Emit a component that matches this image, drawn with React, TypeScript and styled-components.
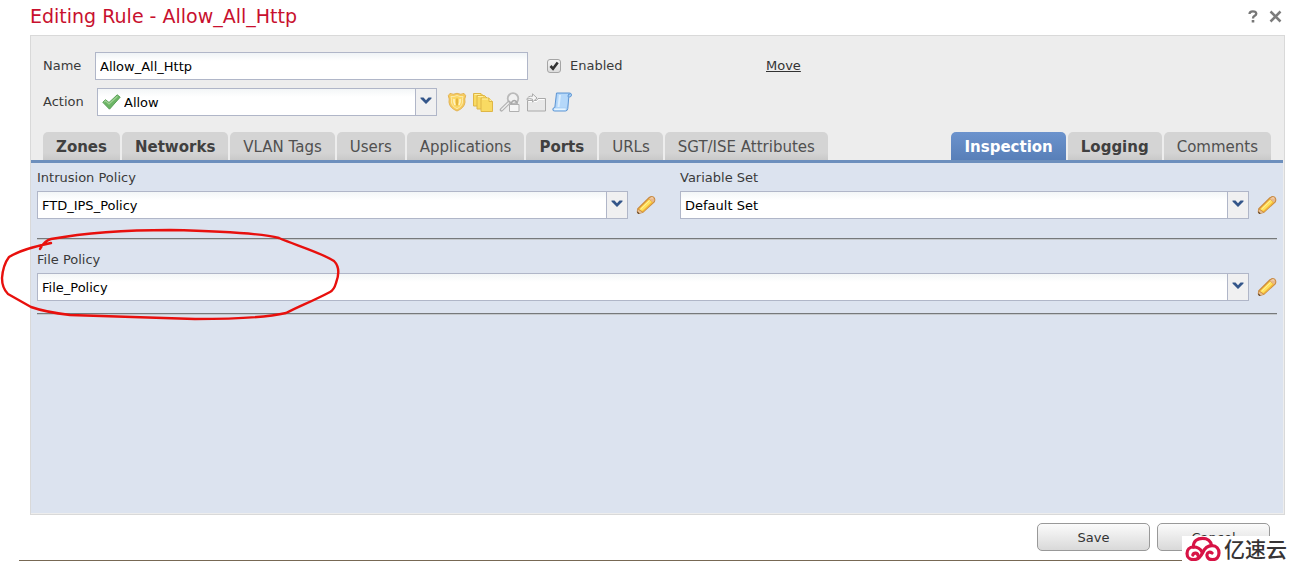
import React from "react";
import styled, { createGlobalStyle } from "styled-components";

const GlobalStyle = createGlobalStyle`
  *, *::before, *::after { box-sizing: border-box; }
  body {
    margin: 0;
    background: #fff;
    color: #3a3a3a;
    font: 13px/16px "DejaVu Sans", Verdana, sans-serif;
  }
  input, select, button { font: inherit; margin: 0; }
`;

const Page = styled.div`
  position: relative;
  overflow: hidden;
`;

const Dialog = styled.main`
  padding: 0 6px 0 30px;
`;

const TitleBar = styled.header`
  display: flex;
  align-items: center;
  justify-content: space-between;
  height: 35px;
  padding: 0 3px 3px 0;
`;

const Title = styled.h1`
  margin: 0;
  color: #c8102e;
  font-size: 19px;
  font-weight: 400;
  line-height: 24px;
`;

const TitleTools = styled.div`
  display: flex;
  gap: 11px;
`;

const IconButton = styled.button`
  display: flex;
  flex: none;
  padding: 0;
  border: 0;
  background: none;
  cursor: pointer;
`;

const Panel = styled.form`
  padding: 0 1px 1px 0;
  border: 1px solid #d9d9d9;
  background: #ededed;
`;

const RuleFields = styled.div`
  display: flex;
  flex-direction: column;
  gap: 8px;
  padding: 16px 12px;
`;

const FieldRow = styled.div`
  display: flex;
  align-items: center;
  height: 28px;
`;

const RowLabel = styled.label<{ $width: number }>`
  flex: none;
  width: ${(p) => p.$width}px;
`;

const TextInput = styled.input`
  width: 433px;
  height: 28px;
  padding: 0 4px;
  border: 1px solid #b0b6c8;
  background: linear-gradient(#eff3f6, #fff 8px);
  color: #000;
`;

const EnabledLabel = styled.label`
  display: flex;
  align-items: center;
  gap: 9px;
  width: 219px;
  margin-left: 19px;
`;

const Checkbox = styled.input`
  appearance: none;
  width: 14px;
  height: 14px;
  border: 1px solid #a5a5a5;
  border-radius: 3px;
  background: linear-gradient(#f4f4f4, #dcdcdc);
  &:checked {
    background: url("data:image/svg+xml,%3Csvg xmlns='http://www.w3.org/2000/svg' viewBox='0 0 12 12'%3E%3Cpath d='M2.5 6 5 8.700 9.700 2.500' fill='none' stroke='%23333' stroke-width='2.600'/%3E%3C/svg%3E"),
      linear-gradient(#f4f4f4, #dcdcdc);
  }
`;

const MoveLink = styled.a`
  color: #333;
`;

const Combo = styled.div<{ $width?: string }>`
  position: relative;
  display: flex;
  flex: ${(p) => (p.$width ? "none" : "1")};
  width: ${(p) => p.$width ?? "auto"};
  min-width: 0;
  height: 28px;
`;

const Select = styled.select<{ $indent?: number }>`
  appearance: none;
  width: 100%;
  padding: 2px 24px 0 ${(p) => p.$indent ?? 4}px;
  border: 1px solid #b0b6c8;
  border-radius: 0;
  background: linear-gradient(#f3f6f7, #fff 8px);
  color: #000;
`;

const ComboArrow = styled.span`
  position: absolute;
  inset: 1px 1px 1px auto;
  display: flex;
  align-items: center;
  justify-content: center;
  width: 21px;
  padding: 0 1px 2px 0;
  border-left: 1px solid #b0b6c8;
  background: #f0f0f1;
  pointer-events: none;
`;

const ComboIcon = styled.span`
  position: absolute;
  top: 6px;
  left: 5px;
  display: flex;
  pointer-events: none;
`;

const OptionIcons = styled.div`
  display: flex;
  gap: 6px;
  margin-left: 10px;
`;

const TabBar = styled.nav`
  display: flex;
  justify-content: space-between;
  padding: 0 12px;
  border-bottom: 3px solid #6d8fbd;
`;

const TabGroup = styled.div`
  display: flex;
  gap: 2px;
`;

const Tab = styled.button<{ $strong?: boolean; $active?: boolean }>`
  height: 28px;
  padding: 1px 13px 0;
  border: 0;
  border-radius: 5px 5px 0 0;
  background: ${(p) =>
    p.$active ? "linear-gradient(#6c93cd, #587fb8)" : "linear-gradient(#d4d4d4 75%, #c9c9c9)"};
  color: ${(p) => (p.$active ? "#fff" : p.$strong ? "#404040" : "#505050")};
  font-size: 15px;
  font-weight: ${(p) => (p.$strong || p.$active ? 700 : 400)};
  white-space: nowrap;
`;

const Content = styled.section`
  min-height: 350px;
  padding: 7px 6px 0;
  background: #dce3ef;
`;

const PolicyGrid = styled.div`
  display: grid;
  grid-template-columns: 619fr 597fr;
  gap: 24px;
`;

const PolicyField = styled.div`
  display: flex;
  flex-direction: column;
  gap: 5px;
`;

const ComboRow = styled.div`
  display: flex;
  align-items: center;
  gap: 8px;
`;

const Divider = styled.hr<{ $gap: number }>`
  height: 2px;
  margin: ${(p) => p.$gap}px 0 12px;
  border: 0;
  border-top: 1px solid #76797b;
  border-bottom: 1px solid #c5c9cd;
`;

const Footer = styled.footer`
  display: flex;
  justify-content: flex-end;
  gap: 7px;
  padding: 8px 15px 9px 0;
`;

const PushButton = styled.button`
  width: 113px;
  height: 28px;
  padding: 2px 6px 0;
  border: 1px solid #999;
  border-radius: 5px;
  background: linear-gradient(#fbfbfb, #d9d9d9);
  color: #333;
`;

const BottomLine = styled.div`
  height: 1px;
  margin-left: 19px;
  background: #776853;
`;

const Annotation = styled.svg`
  position: absolute;
  top: 225px;
  left: 0;
  pointer-events: none;
`;

const Watermark = styled.div`
  position: absolute;
  right: 0;
  bottom: 0;
  display: flex;
  align-items: center;
  gap: 3px;
  height: 25px;
  padding: 0 4px 0 3px;
  background: #fff;
  color: #373435;
  font: 500 21px/25px "Noto Sans CJK SC", sans-serif;
`;

const Chevron = () => (
  <svg width="12" height="8" viewBox="0 0 12 8" aria-hidden="true">
    <path d="M.5.500H3.500L6 3.200 8.500.5H11.500V1.500L6 7 .5 1.500Z" fill="#34568a" />
  </svg>
);

const Pencil = () => (
  <svg width="20" height="20" viewBox="0 0 20 20" aria-hidden="true">
    <path d="M1.200 13.500 12.600 2.300Q15.500.2 18 1.800 20.300 4 18.700 7.200L7.200 17.800 3 19Q.5 18.500.8 16.500Z" fill="#c88a42" />
    <path d="M2.300 14 12.800 3.700 17.200 7.600 7 17Z" fill="#f3b83a" />
    <path d="M3.600 13.900 13 4.700 15.700 7 6.200 16Z" fill="#ffe25e" />
    <path d="M4.500 14.200 13.600 5.300" stroke="#fff4a4" strokeWidth="1" />
    <path d="M13.300 3.300Q15.700 1.400 17.500 2.600 19 4.500 17.700 6.800L17 7.400 12.800 3.800Z" fill="#e9b98c" />
    <path d="M14.500 3.300Q16 2.300 17 3.200" fill="none" stroke="#f8dcc0" />
    <path d="m1.900 14.600 4.600 2.900-3.400.8-1.500-1.300Z" fill="#e7bf92" />
    <path d="M1.200 16.200 3.700 18.500 2.300 18.900Q.8 18 1.200 16.200Z" fill="#5a4330" />
  </svg>
);

const CheckIcon = () => (
  <svg width="19" height="16" viewBox="0 0 19 16" aria-hidden="true">
    <path d="M.8 8.300 3.500 5.700 7 8.500 15.200.8 18.200 3.200 7.500 15.200Z" fill="#6cb565" stroke="#5a9f57" strokeWidth="1" strokeLinejoin="round" />
    <path d="m2.300 8.100 1.300-1.200L7 10l8.500-7.800" fill="none" stroke="#9fd294" strokeWidth="1.200" />
  </svg>
);

const ShieldIcon = () => (
  <svg width="20" height="20" viewBox="0 0 20 20" aria-hidden="true">
    <path d="M1.300 3.700 3 1.400Q6 3.200 10 1.300 14 3.200 17 1.400L18.700 3.700Q17.200 7 18 10.200 17.400 16 10 19 2.600 16 2 10.200 2.800 7 1.300 3.700Z" fill="#f6cb5c" stroke="#e3b455" />
    <path d="M3.900 4.500Q7 5 10 3.500 13 5 16.100 4.500 15 7 15.600 10 15 14.500 10 16.700 5 14.500 4.400 10 5 7 3.900 4.500Z" fill="#fbd765" stroke="#fdeaa8" />
    <path d="M7 7Q6.500 10 8 13M13 7Q13.500 10 12 13" fill="none" stroke="#fff3c4" strokeWidth="1.600" />
    <path d="M10 6.500v7" stroke="#e6b63e" strokeWidth="2" />
  </svg>
);

const FilesIcon = () => (
  <svg width="20" height="20" viewBox="0 0 20 20" aria-hidden="true">
    <g fill="#f9da62" stroke="#dfb646">
      <path d="M.5 1.500H8l3 3V14H.5Z" />
      <path d="M4 3.500h7.500l3 3V17H4Z" />
      <path d="M8 6h8l3.500 3.500v10H8Z" />
    </g>
    <path d="M16 6v3.500h3.500" fill="#fff1a3" stroke="#dfb646" />
    <path d="M1.500 2.500H7M5 4.500h5M9 7h6" stroke="#fff0a0" />
  </svg>
);

const SearchLockIcon = () => (
  <svg width="21" height="20" viewBox="0 0 21 20" aria-hidden="true">
    <circle cx="14" cy="6.500" r="5.300" fill="#f1f1f1" stroke="#bababa" strokeWidth="1.800" />
    <path d="M10 10.500 2.500 17.800" stroke="#b0b0b0" strokeWidth="3.600" strokeLinecap="round" />
    <path d="M9.500 11 2.800 17.500" stroke="#eee" strokeWidth="1.500" strokeLinecap="round" />
    <path d="M12.500 13v-2.500Q15.300 6.500 18 10.500V13" fill="none" stroke="#a9a9a9" strokeWidth="1.500" />
    <path d="M10.500 12.500h9.500v7H10.500Z" fill="#f6f6f6" stroke="#b0b0b0" />
  </svg>
);

const FolderArrowIcon = () => (
  <svg width="20" height="20" viewBox="0 0 20 20" aria-hidden="true">
    <path d="M1.500 8.500h9l1.500-2h7.500V19h-18Z" fill="#e8e8e8" stroke="#aaa" />
    <path d="M2.500 9.500h8.500l1.500-2h6" fill="none" stroke="#fff" />
    <path d="M.8 7.500Q2 3.600 6.500 4.300V1.800L11 6 6.500 10V7.200Q3 5.500.8 7.500Z" fill="#f6f6f6" stroke="#acacac" />
  </svg>
);

const ScrollIcon = () => (
  <svg width="20" height="20" viewBox="0 0 20 20" aria-hidden="true">
    <path d="M4.500 1H17.500q2 0 2 2-.2 2-2 2H16.800L15.800 16.500q-.3 2.500-2.300 2.500H2.500Q.6 19 .8 17.300q.2-1.800 2-1.800Z" fill="#a6cff7" stroke="#5f96d3" />
    <path d="M5.600 2H16L14.800 15.500H4Z" fill="#b5d8fa" />
    <path d="M8 3 6.500 15" stroke="#d9edfe" strokeWidth="2" />
    <path d="M2.200 17.300h11.500" stroke="#e7f5ff" strokeWidth="1.800" />
    <path d="M16.200 5V3q.5-1.300 1.800-1" fill="none" stroke="#5f96d3" />
  </svg>
);

const policyTabs = [
  { name: "Zones", strong: true },
  { name: "Networks", strong: true },
  { name: "VLAN Tags" },
  { name: "Users" },
  { name: "Applications" },
  { name: "Ports", strong: true },
  { name: "URLs" },
  { name: "SGT/ISE Attributes" },
];

const PolicySelect = ({ id, label, value }: { id: string; label: string; value: string }) => (
  <PolicyField>
    <label htmlFor={id}>{label}</label>
    <ComboRow>
      <Combo>
        <Select id={id} defaultValue={value}>
          <option>{value}</option>
        </Select>
        <ComboArrow><Chevron /></ComboArrow>
      </Combo>
      <IconButton type="button" aria-label={`Edit ${label}`}><Pencil /></IconButton>
    </ComboRow>
  </PolicyField>
);

export default function App() {
  return (
    <Page>
      <GlobalStyle />
      <Dialog>
        <TitleBar>
          <Title>Editing Rule - Allow_All_Http</Title>
          <TitleTools>
            <IconButton type="button" aria-label="Help">
              <svg width="10" height="13" viewBox="0 0 10 13">
                <path d="M1.500 4Q1.500 1.300 4.800 1.300T8.300 3.700Q8.300 5 6.500 5.900 5 6.600 5 8.500" fill="none" stroke="#777" strokeWidth="2.300" />
                <path d="M3.700 10h2.600v2.500H3.700Z" fill="#777" />
              </svg>
            </IconButton>
            <IconButton type="button" aria-label="Close">
              <svg width="13" height="13" viewBox="0 0 13 13">
                <path d="m1.500 1.500 10 10m0-10-10 10" stroke="#7c7c7c" strokeWidth="2.500" />
              </svg>
            </IconButton>
          </TitleTools>
        </TitleBar>
        <Panel onSubmit={(e) => e.preventDefault()}>
          <RuleFields>
            <FieldRow>
              <RowLabel $width={52} htmlFor="name">Name</RowLabel>
              <TextInput id="name" defaultValue="Allow_All_Http" />
              <EnabledLabel>
                <Checkbox type="checkbox" defaultChecked />
                Enabled
              </EnabledLabel>
              <MoveLink href="#move">Move</MoveLink>
            </FieldRow>
            <FieldRow>
              <RowLabel $width={54} htmlFor="action">Action</RowLabel>
              <Combo $width="340px">
                <Select id="action" $indent={26} defaultValue="Allow">
                  <option>Allow</option>
                </Select>
                <ComboIcon><CheckIcon /></ComboIcon>
                <ComboArrow><Chevron /></ComboArrow>
              </Combo>
              <OptionIcons>
                <ShieldIcon />
                <FilesIcon />
                <SearchLockIcon />
                <FolderArrowIcon />
                <ScrollIcon />
              </OptionIcons>
            </FieldRow>
          </RuleFields>
          <TabBar>
            <TabGroup>
              {policyTabs.map((t) => (
                <Tab key={t.name} type="button" $strong={t.strong}>{t.name}</Tab>
              ))}
            </TabGroup>
            <TabGroup>
              <Tab type="button" $active>Inspection</Tab>
              <Tab type="button" $strong>Logging</Tab>
              <Tab type="button">Comments</Tab>
            </TabGroup>
          </TabBar>
          <Content>
            <PolicyGrid>
              <PolicySelect id="intrusion" label="Intrusion Policy" value="FTD_IPS_Policy" />
              <PolicySelect id="variables" label="Variable Set" value="Default Set" />
            </PolicyGrid>
            <Divider $gap={19} />
            <PolicySelect id="file" label="File Policy" value="File_Policy" />
            <Divider $gap={12} />
          </Content>
        </Panel>
        <Footer>
          <PushButton type="button">Save</PushButton>
          <PushButton type="button">Cancel</PushButton>
        </Footer>
      </Dialog>
      <BottomLine />
      <Annotation width="345" height="98" viewBox="0 225 345 98" aria-hidden="true">
        <path
          d="M40 249Q44 241 51 239C90 232 130 230 170 230 215 231 260 233 279 238 295 245 320 252 334 261 340 267 339 275 336 283Q334 290 330 292C315 300 300 306 286 313 260 319 220 319 195 319L70 315Q45 312 31 307L8 294Q2 288 2 278 3 265 9 257 22 249 51 243"
          fill="none"
          stroke="#e8100d"
          strokeWidth="2.400"
          strokeLinecap="round"
          strokeLinejoin="round"
        />
      </Annotation>
      <Watermark>
        <svg width="36" height="25" viewBox="0 0 36 25" aria-hidden="true">
          <g fill="none" stroke="#d71345" strokeWidth="3.200" strokeLinecap="round">
            <path d="M8.500 11C8 5 12.500 2.300 17.500 2.300 22.500 2.300 26 5 26.500 9.500" />
            <path d="M13 19.500C12.500 16.500 8.500 16.500 7.800 19" />
            <path d="M8.500 11C4.500 11 2 14 2 17.500S4.700 23.700 8.500 23.700C13 23.700 15.500 21 17.500 17 19.500 12.500 22.500 9.700 27 9.700S34 13 34 17 31.500 23.700 27.500 23.700 21.500 21 22 18.500 25 15.500 27 17" />
            <path d="M8.500 11C12.500 11 15.500 13 17 16" />
          </g>
        </svg>
        亿速云
      </Watermark>
    </Page>
  );
}
